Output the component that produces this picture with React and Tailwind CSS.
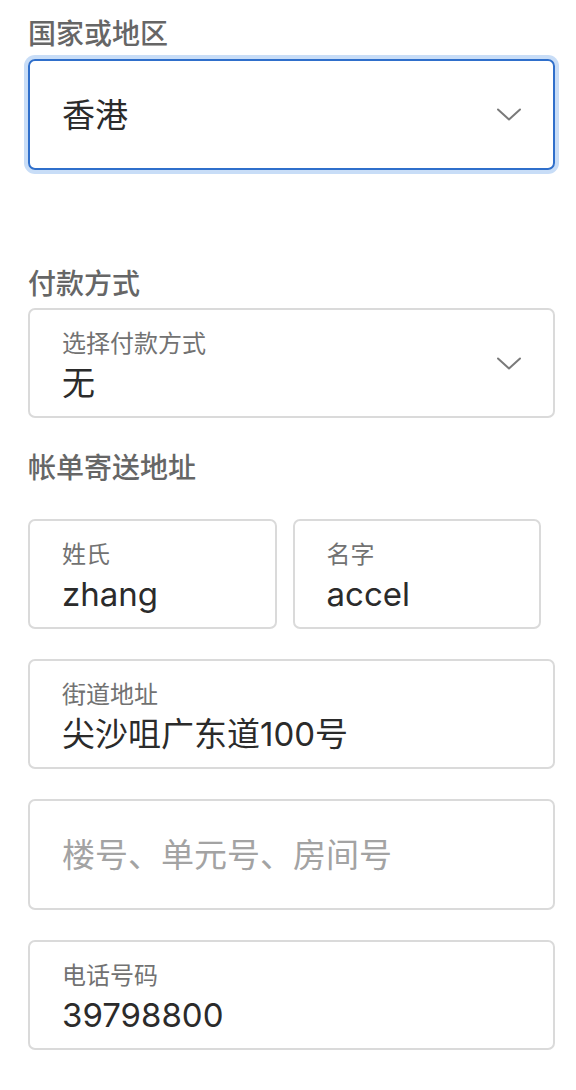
import React from "react";

const font = { fontFamily: 'Inter, "Noto Sans CJK SC", sans-serif' };

function Chevron() {
  return (
    <svg width="24" height="13" viewBox="0 0 24 13" fill="none" className="shrink-0">
      <polyline points="1,1.5 12,11.5 23,1.5" stroke="#7a7a7a" strokeWidth="2" strokeLinecap="round" strokeLinejoin="round" />
    </svg>
  );
}

function Field({ label, value, placeholder, className = "" }) {
  return (
    <div className={`flex h-[110px] flex-col rounded-[7px] border-2 border-[#dadada] bg-white pl-[32px] pr-4 ${placeholder ? "justify-center" : "pt-[19px]"} ${className}`}>
      {placeholder ? (
        <div className="text-[33px] leading-[40px] text-[#a3a3a3]">{placeholder}</div>
      ) : (
        <>
          <div className="text-[24px] leading-[30px] text-[#727272]">{label}</div>
          <div className="mt-[4px] text-[33px] leading-[40px] text-[#2b2b2b]">{value}</div>
        </>
      )}
    </div>
  );
}

export default function App() {
  return (
    <div className="min-h-[1090px] bg-white pl-[28px] pr-[21px] pt-[16px]" style={font}>
      <h2 className="text-[28px] font-medium leading-[36px] text-[#666]">国家或地区</h2>
      <div className="mt-[7px] flex h-[111px] items-center justify-between rounded-[7px] border-2 border-[#2f6fcb] pl-[32px] pr-[32px] ring-4 ring-[#c8ddf7]">
        <span className="text-[33px] leading-[40px] text-[#2b2b2b]">香港</span>
        <Chevron />
      </div>

      <h2 className="mt-[96px] text-[28px] font-medium leading-[36px] text-[#666]">付款方式</h2>
      <div className="mt-[6px] flex h-[110px] items-center justify-between rounded-[7px] border-2 border-[#dadada] pl-[32px] pr-[32px]">
        <div className="flex flex-col pt-[5px]">
          <span className="text-[24px] leading-[30px] text-[#727272]">选择付款方式</span>
          <span className="mt-[4px] text-[33px] leading-[40px] text-[#2b2b2b]">无</span>
        </div>
        <Chevron />
      </div>

      <h2 className="mt-[32px] text-[28px] font-medium leading-[36px] text-[#666]">帐单寄送地址</h2>
      <div className="mt-[33px] flex flex-col gap-[30px]">
        <div className="flex gap-[16px] pr-[14px]">
          <Field label="姓氏" value="zhang" className="flex-1" />
          <Field label="名字" value="accel" className="flex-1" />
        </div>
        <Field label="街道地址" value="尖沙咀广东道100号" />
        <Field placeholder="楼号、单元号、房间号" className="h-[111px]" />
        <Field label="电话号码" value="39798800" />
      </div>
    </div>
  );
}
